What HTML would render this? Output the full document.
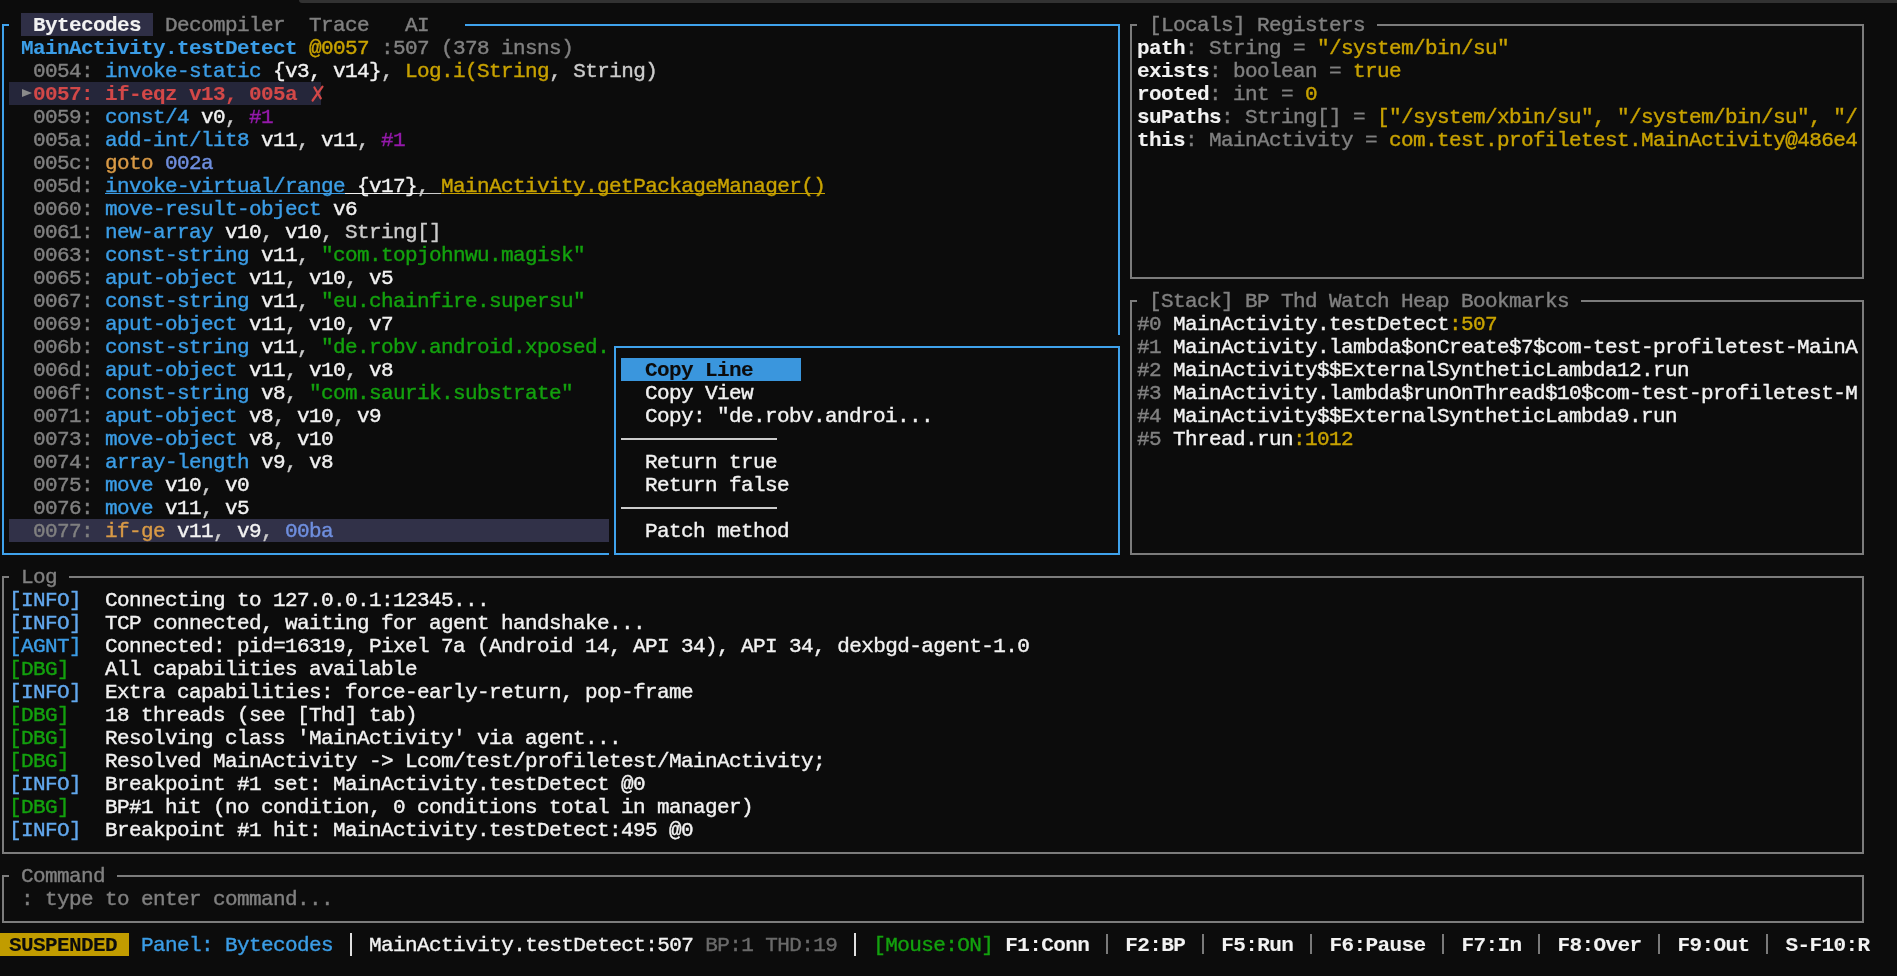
<!DOCTYPE html>
<html><head><meta charset="utf-8"><style>
html,body{margin:0;padding:0;background:#0c0c0c;}
.t{-webkit-font-smoothing:antialiased;-webkit-text-stroke:0.4px currentColor;}
#w{position:absolute;left:0;top:0;width:1897px;height:976px;will-change:transform;}
body{width:1897px;height:976px;position:relative;overflow:hidden;}
.t{position:absolute;height:23px;line-height:23px;white-space:pre;font-family:"Liberation Mono",monospace;font-size:21px;letter-spacing:-0.6px;color:#cccccc;}
</style></head><body><div id="w">
<div style="position:absolute;left:299px;top:0px;width:1598px;height:3px;background:#323232;border-bottom-left-radius:3px;"></div>
<div style="position:absolute;left:2px;top:24px;width:7px;height:2px;background:#3fa2ec;"></div>
<div style="position:absolute;left:465px;top:24px;width:655px;height:2px;background:#3fa2ec;"></div>
<div style="position:absolute;left:2px;top:553px;width:1118px;height:2px;background:#3fa2ec;"></div>
<div style="position:absolute;left:2px;top:24px;width:2px;height:531px;background:#3fa2ec;"></div>
<div style="position:absolute;left:1118px;top:24px;width:2px;height:531px;background:#3fa2ec;"></div>
<div style="position:absolute;left:21px;top:13px;width:132px;height:23px;background:#2f2f46;"></div>
<div class="t" style="left:21px;top:14px"><span style="color:#f2f2f2;font-weight:bold;-webkit-text-stroke:0.1px currentColor"> Bytecodes </span><span style="color:#808080"> Decompiler </span><span style="color:#808080"> Trace </span><span style="color:#808080">  AI</span></div>
<div class="t" style="left:21px;top:37px"><span style="color:#3b9de6;font-weight:bold;-webkit-text-stroke:0.1px currentColor">MainActivity.testDetect</span><span style="color:#cccccc"> </span><span style="color:#c8a200">@0057</span><span style="color:#808080"> :507 (378 insns)</span></div>
<div style="position:absolute;left:9px;top:82px;width:312px;height:23px;background:#25263a;"></div>
<div style="position:absolute;left:9px;top:519px;width:1104px;height:23px;background:#313148;"></div>
<svg style="position:absolute;left:21px;top:82px" width="12" height="23"><polygon points="1,7 11,11 1,15" fill="#8a8a8a"/></svg>
<div class="t" style="left:33px;top:83px"><span style="color:#d24848;font-weight:bold;-webkit-text-stroke:0.1px currentColor">0057: if-eqz v13, 005a</span></div>
<svg style="position:absolute;left:305px;top:80px" width="25" height="25"><g stroke="#d24848" stroke-width="2.2" stroke-linecap="round"><line x1="17.5" y1="6.6" x2="7.6" y2="20.5"/><line x1="9.4" y1="7.5" x2="15.8" y2="18.4"/></g></svg>
<div class="t" style="left:33px;top:60px"><span style="color:#808080">0054: </span><span style="color:#3b9de6">invoke-static</span><span style="color:#f2f2f2"> {v3, v14}</span><span style="color:#cccccc">, </span><span style="color:#c8a200">Log.i(String</span><span style="color:#cccccc">, </span><span style="color:#cccccc">String)</span></div>
<div class="t" style="left:33px;top:106px"><span style="color:#808080">0059: </span><span style="color:#3b9de6">const/4</span><span style="color:#f2f2f2"> v0</span><span style="color:#cccccc">, </span><span style="color:#951aab">#1</span></div>
<div class="t" style="left:33px;top:129px"><span style="color:#808080">005a: </span><span style="color:#3b9de6">add-int/lit8</span><span style="color:#f2f2f2"> v11</span><span style="color:#cccccc">, </span><span style="color:#f2f2f2">v11</span><span style="color:#cccccc">, </span><span style="color:#951aab">#1</span></div>
<div class="t" style="left:33px;top:152px"><span style="color:#808080">005c: </span><span style="color:#d99a46">goto</span><span style="color:#cccccc"> </span><span style="color:#6f8fdf">002a</span></div>
<div class="t" style="left:33px;top:175px"><span style="color:#808080">005d: </span><span style="color:#3b9de6">invoke-virtual/range</span><span style="color:#f2f2f2"> {v17}</span><span style="color:#cccccc">, </span><span style="color:#c8a200">MainActivity.getPackageManager()</span></div>
<div class="t" style="left:33px;top:198px"><span style="color:#808080">0060: </span><span style="color:#3b9de6">move-result-object</span><span style="color:#f2f2f2"> v6</span></div>
<div class="t" style="left:33px;top:221px"><span style="color:#808080">0061: </span><span style="color:#3b9de6">new-array</span><span style="color:#f2f2f2"> v10</span><span style="color:#cccccc">, </span><span style="color:#f2f2f2">v10</span><span style="color:#cccccc">, </span><span style="color:#cccccc">String[]</span></div>
<div class="t" style="left:33px;top:244px"><span style="color:#808080">0063: </span><span style="color:#3b9de6">const-string</span><span style="color:#f2f2f2"> v11</span><span style="color:#cccccc">, </span><span style="color:#13a10e">&quot;com.topjohnwu.magisk&quot;</span></div>
<div class="t" style="left:33px;top:267px"><span style="color:#808080">0065: </span><span style="color:#3b9de6">aput-object</span><span style="color:#f2f2f2"> v11</span><span style="color:#cccccc">, </span><span style="color:#f2f2f2">v10</span><span style="color:#cccccc">, </span><span style="color:#f2f2f2">v5</span></div>
<div class="t" style="left:33px;top:290px"><span style="color:#808080">0067: </span><span style="color:#3b9de6">const-string</span><span style="color:#f2f2f2"> v11</span><span style="color:#cccccc">, </span><span style="color:#13a10e">&quot;eu.chainfire.supersu&quot;</span></div>
<div class="t" style="left:33px;top:313px"><span style="color:#808080">0069: </span><span style="color:#3b9de6">aput-object</span><span style="color:#f2f2f2"> v11</span><span style="color:#cccccc">, </span><span style="color:#f2f2f2">v10</span><span style="color:#cccccc">, </span><span style="color:#f2f2f2">v7</span></div>
<div class="t" style="left:33px;top:336px"><span style="color:#808080">006b: </span><span style="color:#3b9de6">const-string</span><span style="color:#f2f2f2"> v11</span><span style="color:#cccccc">, </span><span style="color:#13a10e">&quot;de.robv.android.xposed.</span></div>
<div class="t" style="left:33px;top:359px"><span style="color:#808080">006d: </span><span style="color:#3b9de6">aput-object</span><span style="color:#f2f2f2"> v11</span><span style="color:#cccccc">, </span><span style="color:#f2f2f2">v10</span><span style="color:#cccccc">, </span><span style="color:#f2f2f2">v8</span></div>
<div class="t" style="left:33px;top:382px"><span style="color:#808080">006f: </span><span style="color:#3b9de6">const-string</span><span style="color:#f2f2f2"> v8</span><span style="color:#cccccc">, </span><span style="color:#13a10e">&quot;com.saurik.substrate&quot;</span></div>
<div class="t" style="left:33px;top:405px"><span style="color:#808080">0071: </span><span style="color:#3b9de6">aput-object</span><span style="color:#f2f2f2"> v8</span><span style="color:#cccccc">, </span><span style="color:#f2f2f2">v10</span><span style="color:#cccccc">, </span><span style="color:#f2f2f2">v9</span></div>
<div class="t" style="left:33px;top:428px"><span style="color:#808080">0073: </span><span style="color:#3b9de6">move-object</span><span style="color:#f2f2f2"> v8</span><span style="color:#cccccc">, </span><span style="color:#f2f2f2">v10</span></div>
<div class="t" style="left:33px;top:451px"><span style="color:#808080">0074: </span><span style="color:#3b9de6">array-length</span><span style="color:#f2f2f2"> v9</span><span style="color:#cccccc">, </span><span style="color:#f2f2f2">v8</span></div>
<div class="t" style="left:33px;top:474px"><span style="color:#808080">0075: </span><span style="color:#3b9de6">move</span><span style="color:#f2f2f2"> v10</span><span style="color:#cccccc">, </span><span style="color:#f2f2f2">v0</span></div>
<div class="t" style="left:33px;top:497px"><span style="color:#808080">0076: </span><span style="color:#3b9de6">move</span><span style="color:#f2f2f2"> v11</span><span style="color:#cccccc">, </span><span style="color:#f2f2f2">v5</span></div>
<div class="t" style="left:33px;top:520px"><span style="color:#808080">0077: </span><span style="color:#d99a46">if-ge</span><span style="color:#f2f2f2"> v11</span><span style="color:#cccccc">, </span><span style="color:#f2f2f2">v9</span><span style="color:#cccccc">, </span><span style="color:#6f8fdf">00ba</span></div>
<div style="position:absolute;left:105px;top:193px;width:240px;height:1px;background:#3b9de6;"></div>
<div style="position:absolute;left:345px;top:193px;width:72px;height:1px;background:#f2f2f2;"></div>
<div style="position:absolute;left:417px;top:193px;width:24px;height:1px;background:#cccccc;"></div>
<div style="position:absolute;left:441px;top:193px;width:384px;height:1px;background:#c8a200;"></div>
<div style="position:absolute;left:1130px;top:24px;width:7px;height:2px;background:#7c7c7c;"></div>
<div style="position:absolute;left:1377px;top:24px;width:487px;height:2px;background:#7c7c7c;"></div>
<div style="position:absolute;left:1130px;top:277px;width:734px;height:2px;background:#7c7c7c;"></div>
<div style="position:absolute;left:1130px;top:24px;width:2px;height:255px;background:#7c7c7c;"></div>
<div style="position:absolute;left:1862px;top:24px;width:2px;height:255px;background:#7c7c7c;"></div>
<div class="t" style="left:1149px;top:14px"><span style="color:#808080">[Locals] Registers</span></div>
<div class="t" style="left:1137px;top:37px"><span style="color:#f2f2f2;font-weight:bold;-webkit-text-stroke:0.1px currentColor">path</span><span style="color:#808080">: String = </span><span style="color:#c8a200">&quot;/system/bin/su&quot;</span></div>
<div class="t" style="left:1137px;top:60px"><span style="color:#f2f2f2;font-weight:bold;-webkit-text-stroke:0.1px currentColor">exists</span><span style="color:#808080">: boolean = </span><span style="color:#c8a200">true</span></div>
<div class="t" style="left:1137px;top:83px"><span style="color:#f2f2f2;font-weight:bold;-webkit-text-stroke:0.1px currentColor">rooted</span><span style="color:#808080">: int = </span><span style="color:#c8a200">0</span></div>
<div class="t" style="left:1137px;top:106px"><span style="color:#f2f2f2;font-weight:bold;-webkit-text-stroke:0.1px currentColor">suPaths</span><span style="color:#808080">: String[] = </span><span style="color:#c8a200">[&quot;/system/xbin/su&quot;, &quot;/system/bin/su&quot;, &quot;/</span></div>
<div class="t" style="left:1137px;top:129px"><span style="color:#f2f2f2;font-weight:bold;-webkit-text-stroke:0.1px currentColor">this</span><span style="color:#808080">: MainActivity = </span><span style="color:#c8a200">com.test.profiletest.MainActivity@486e4</span></div>
<div style="position:absolute;left:1130px;top:300px;width:7px;height:2px;background:#7c7c7c;"></div>
<div style="position:absolute;left:1581px;top:300px;width:283px;height:2px;background:#7c7c7c;"></div>
<div style="position:absolute;left:1130px;top:553px;width:734px;height:2px;background:#7c7c7c;"></div>
<div style="position:absolute;left:1130px;top:300px;width:2px;height:255px;background:#7c7c7c;"></div>
<div style="position:absolute;left:1862px;top:300px;width:2px;height:255px;background:#7c7c7c;"></div>
<div class="t" style="left:1149px;top:290px"><span style="color:#808080">[Stack] BP Thd Watch Heap Bookmarks</span></div>
<div class="t" style="left:1137px;top:313px"><span style="color:#808080">#0 </span><span style="color:#f2f2f2">MainActivity.testDetect</span><span style="color:#c8a200">:507</span></div>
<div class="t" style="left:1137px;top:336px"><span style="color:#808080">#1 </span><span style="color:#f2f2f2">MainActivity.lambda$onCreate$7$com-test-profiletest-MainA</span></div>
<div class="t" style="left:1137px;top:359px"><span style="color:#808080">#2 </span><span style="color:#f2f2f2">MainActivity$$ExternalSyntheticLambda12.run</span></div>
<div class="t" style="left:1137px;top:382px"><span style="color:#808080">#3 </span><span style="color:#f2f2f2">MainActivity.lambda$runOnThread$10$com-test-profiletest-M</span></div>
<div class="t" style="left:1137px;top:405px"><span style="color:#808080">#4 </span><span style="color:#f2f2f2">MainActivity$$ExternalSyntheticLambda9.run</span></div>
<div class="t" style="left:1137px;top:428px"><span style="color:#808080">#5 </span><span style="color:#f2f2f2">Thread.run</span><span style="color:#c8a200">:1012</span></div>
<div style="position:absolute;left:609px;top:335px;width:516px;height:230px;background:#0c0c0c;"></div>
<div style="position:absolute;left:614px;top:346px;width:506px;height:2px;background:#3fa2ec;"></div>
<div style="position:absolute;left:614px;top:553px;width:506px;height:2px;background:#3fa2ec;"></div>
<div style="position:absolute;left:614px;top:346px;width:2px;height:209px;background:#3fa2ec;"></div>
<div style="position:absolute;left:1118px;top:346px;width:2px;height:209px;background:#3fa2ec;"></div>
<div style="position:absolute;left:621px;top:358px;width:180px;height:23px;background:#3a96dd;"></div>
<div class="t" style="left:645px;top:359px"><span style="color:#0c0c0c;font-weight:bold;-webkit-text-stroke:0.1px currentColor">Copy Line</span></div>
<div class="t" style="left:645px;top:382px"><span style="color:#f2f2f2">Copy View</span></div>
<div class="t" style="left:645px;top:405px"><span style="color:#f2f2f2">Copy: &quot;de.robv.androi...</span></div>
<div style="position:absolute;left:621px;top:438px;width:156px;height:2px;background:#cccccc;"></div>
<div class="t" style="left:645px;top:451px"><span style="color:#f2f2f2">Return true</span></div>
<div class="t" style="left:645px;top:474px"><span style="color:#f2f2f2">Return false</span></div>
<div style="position:absolute;left:621px;top:507px;width:156px;height:2px;background:#cccccc;"></div>
<div class="t" style="left:645px;top:520px"><span style="color:#f2f2f2">Patch method</span></div>
<div style="position:absolute;left:2px;top:576px;width:7px;height:2px;background:#7c7c7c;"></div>
<div style="position:absolute;left:69px;top:576px;width:1795px;height:2px;background:#7c7c7c;"></div>
<div style="position:absolute;left:2px;top:852px;width:1862px;height:2px;background:#7c7c7c;"></div>
<div style="position:absolute;left:2px;top:576px;width:2px;height:278px;background:#7c7c7c;"></div>
<div style="position:absolute;left:1862px;top:576px;width:2px;height:278px;background:#7c7c7c;"></div>
<div class="t" style="left:21px;top:566px"><span style="color:#808080">Log</span></div>
<div class="t" style="left:9px;top:589px"><span style="color:#62a8ee">[INFO]</span></div>
<div class="t" style="left:105px;top:589px"><span style="color:#f2f2f2">Connecting to 127.0.0.1:12345...</span></div>
<div class="t" style="left:9px;top:612px"><span style="color:#62a8ee">[INFO]</span></div>
<div class="t" style="left:105px;top:612px"><span style="color:#f2f2f2">TCP connected, waiting for agent handshake...</span></div>
<div class="t" style="left:9px;top:635px"><span style="color:#3b9de6">[AGNT]</span></div>
<div class="t" style="left:105px;top:635px"><span style="color:#f2f2f2">Connected: pid=16319, Pixel 7a (Android 14, API 34), API 34, dexbgd-agent-1.0</span></div>
<div class="t" style="left:9px;top:658px"><span style="color:#13a10e">[DBG]</span></div>
<div class="t" style="left:105px;top:658px"><span style="color:#f2f2f2">All capabilities available</span></div>
<div class="t" style="left:9px;top:681px"><span style="color:#62a8ee">[INFO]</span></div>
<div class="t" style="left:105px;top:681px"><span style="color:#f2f2f2">Extra capabilities: force-early-return, pop-frame</span></div>
<div class="t" style="left:9px;top:704px"><span style="color:#13a10e">[DBG]</span></div>
<div class="t" style="left:105px;top:704px"><span style="color:#f2f2f2">18 threads (see [Thd] tab)</span></div>
<div class="t" style="left:9px;top:727px"><span style="color:#13a10e">[DBG]</span></div>
<div class="t" style="left:105px;top:727px"><span style="color:#f2f2f2">Resolving class &#x27;MainActivity&#x27; via agent...</span></div>
<div class="t" style="left:9px;top:750px"><span style="color:#13a10e">[DBG]</span></div>
<div class="t" style="left:105px;top:750px"><span style="color:#f2f2f2">Resolved MainActivity -&gt; Lcom/test/profiletest/MainActivity;</span></div>
<div class="t" style="left:9px;top:773px"><span style="color:#62a8ee">[INFO]</span></div>
<div class="t" style="left:105px;top:773px"><span style="color:#f2f2f2">Breakpoint #1 set: MainActivity.testDetect @0</span></div>
<div class="t" style="left:9px;top:796px"><span style="color:#13a10e">[DBG]</span></div>
<div class="t" style="left:105px;top:796px"><span style="color:#f2f2f2">BP#1 hit (no condition, 0 conditions total in manager)</span></div>
<div class="t" style="left:9px;top:819px"><span style="color:#62a8ee">[INFO]</span></div>
<div class="t" style="left:105px;top:819px"><span style="color:#f2f2f2">Breakpoint #1 hit: MainActivity.testDetect:495 @0</span></div>
<div style="position:absolute;left:2px;top:875px;width:7px;height:2px;background:#7c7c7c;"></div>
<div style="position:absolute;left:117px;top:875px;width:1747px;height:2px;background:#7c7c7c;"></div>
<div style="position:absolute;left:2px;top:921px;width:1862px;height:2px;background:#7c7c7c;"></div>
<div style="position:absolute;left:2px;top:875px;width:2px;height:48px;background:#7c7c7c;"></div>
<div style="position:absolute;left:1862px;top:875px;width:2px;height:48px;background:#7c7c7c;"></div>
<div class="t" style="left:21px;top:865px"><span style="color:#808080">Command</span></div>
<div class="t" style="left:21px;top:888px"><span style="color:#808080">: type to enter command...</span></div>
<div style="position:absolute;left:-3px;top:933px;width:132px;height:23px;background:#c19c00;"></div>
<div class="t" style="left:-3px;top:934px"><span style="color:#0c0c0c;font-weight:bold;-webkit-text-stroke:0.1px currentColor"> SUSPENDED </span><span style="color:#cccccc"> </span><span style="color:#3b9de6">Panel: </span><span style="color:#3b9de6">Bytecodes</span><span style="color:#f2f2f2">   </span><span style="color:#f2f2f2">MainActivity.testDetect:507</span><span style="color:#cccccc"> </span><span style="color:#6a6a6a">BP:1 THD:19</span><span style="color:#f2f2f2">   </span><span style="color:#13a10e">[Mouse:ON]</span><span style="color:#cccccc"> </span><span style="color:#f2f2f2;font-weight:bold;-webkit-text-stroke:0.1px currentColor">F1:Conn</span><span style="color:#555555">   </span><span style="color:#f2f2f2;font-weight:bold;-webkit-text-stroke:0.1px currentColor">F2:BP</span><span style="color:#555555">   </span><span style="color:#f2f2f2;font-weight:bold;-webkit-text-stroke:0.1px currentColor">F5:Run</span><span style="color:#555555">   </span><span style="color:#f2f2f2;font-weight:bold;-webkit-text-stroke:0.1px currentColor">F6:Pause</span><span style="color:#555555">   </span><span style="color:#f2f2f2;font-weight:bold;-webkit-text-stroke:0.1px currentColor">F7:In</span><span style="color:#555555">   </span><span style="color:#f2f2f2;font-weight:bold;-webkit-text-stroke:0.1px currentColor">F8:Over</span><span style="color:#555555">   </span><span style="color:#f2f2f2;font-weight:bold;-webkit-text-stroke:0.1px currentColor">F9:Out</span><span style="color:#555555">   </span><span style="color:#f2f2f2;font-weight:bold;-webkit-text-stroke:0.1px currentColor">S-F10:R</span></div>
<div style="position:absolute;left:350px;top:933px;width:2px;height:23px;background:#e0e0e0;"></div>
<div style="position:absolute;left:854px;top:933px;width:2px;height:23px;background:#e0e0e0;"></div>
<div style="position:absolute;left:1106px;top:934px;width:2px;height:20px;background:#7a7a7a;"></div>
<div style="position:absolute;left:1202px;top:934px;width:2px;height:20px;background:#7a7a7a;"></div>
<div style="position:absolute;left:1310px;top:934px;width:2px;height:20px;background:#7a7a7a;"></div>
<div style="position:absolute;left:1442px;top:934px;width:2px;height:20px;background:#7a7a7a;"></div>
<div style="position:absolute;left:1538px;top:934px;width:2px;height:20px;background:#7a7a7a;"></div>
<div style="position:absolute;left:1658px;top:934px;width:2px;height:20px;background:#7a7a7a;"></div>
<div style="position:absolute;left:1766px;top:934px;width:2px;height:20px;background:#7a7a7a;"></div>
</div></body></html>
